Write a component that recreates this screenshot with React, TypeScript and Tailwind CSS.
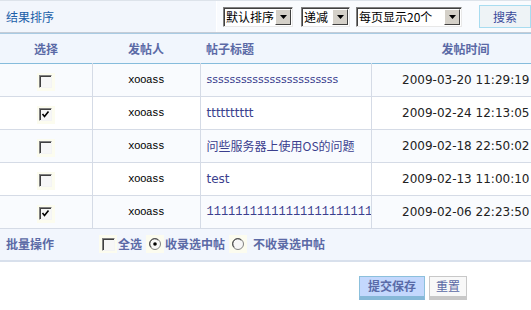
import React from "react";

const cjk = "font-['Noto_Sans_CJK_SC',sans-serif]";

function Check({ on }: { on?: boolean }) {
  return (
    <span className="inline-flex h-[18px] w-[18px] items-center justify-center bg-[#fcfcef]">
      <span className="flex h-[13px] w-[13px] items-center justify-center border border-t-[#808080] border-l-[#808080] border-r-[#f4f4f4] border-b-[#f4f4f4] bg-[#f7f7f7] shadow-[inset_1px_1px_0_#404040]">
        {on && (
          <svg width="9" height="9" viewBox="0 0 9 9">
            <path d="M1.5 4 L3.5 6.5 L7.5 1.5" stroke="#000" strokeWidth="1.6" fill="none" />
          </svg>
        )}
      </span>
    </span>
  );
}

function Radio({ on }: { on?: boolean }) {
  return (
    <span className="inline-flex h-[18px] w-[18px] items-center justify-center bg-[#fcfcef]">
      <svg width="12" height="12" viewBox="0 0 12 12">
        <circle cx="6" cy="6" r="5.5" fill="#f7f7f7" stroke="#808080" />
        <path d="M2.2 9.2 A4.5 4.5 0 0 1 9.2 2.2" stroke="#404040" fill="none" />
        {on && <circle cx="6" cy="6" r="1.8" fill="#000" />}
      </svg>
    </span>
  );
}

function Select({ label, w }: { label: string; w: string }) {
  return (
    <div className={`flex h-[20px] items-center border border-t-[#808080] border-l-[#808080] border-r-[#e8e8e8] border-b-[#e8e8e8] bg-white shadow-[inset_1px_1px_0_#404040] ${w}`}>
      <span className={`flex-1 whitespace-nowrap pl-[2px] text-[12px] leading-[16px] text-black ${cjk}`}>{label}</span>
      <span className="mr-[1px] flex h-[16px] w-[16px] shrink-0 items-center justify-center border border-t-white border-l-white border-r-[#404040] border-b-[#404040] bg-[#d4d0c8]">
        <svg width="7" height="4" viewBox="0 0 7 4">
          <path d="M0 0 H7 L3.5 4 Z" fill="#000" />
        </svg>
      </span>
    </div>
  );
}

type Row = { on: boolean; title: string; titleCls: string; time: string };

const rows: Row[] = [
  { on: false, title: "sssssssssssssssssssssss", titleCls: "font-['DejaVu_Sans',sans-serif] text-[11px]", time: "2009-03-20 11:29:19" },
  { on: true, title: "tttttttttt", titleCls: "font-['DejaVu_Sans',sans-serif] text-[12px]", time: "2009-02-24 12:13:05" },
  { on: false, title: "问些服务器上使用OS的问题", titleCls: `${cjk} text-[12px]`, time: "2009-02-18 22:50:02" },
  { on: false, title: "test", titleCls: "font-['DejaVu_Sans',sans-serif] text-[12px]", time: "2009-02-13 11:00:10" },
  { on: true, title: "111111111111111111111111", titleCls: "font-['Liberation_Mono',monospace] text-[12px]", time: "2009-02-06 22:23:50" },
];

export default function App() {
  return (
    <div className="h-[310px] w-[531px] overflow-hidden bg-white">
      <div className="flex h-[33px] border-t border-b border-t-[#dde3ea] border-b-[#c5ccd6]">
        <div className={`flex w-[221px] items-center bg-[#f2f6fc] pl-[6px] text-[12px] text-[#2060a8] ${cjk}`}>结果排序</div>
        <div className="flex flex-1 items-center gap-[6px] border-l border-white bg-[#f9fbfe] pl-[6px]">
          <Select label="默认排序" w="w-[70px]" />
          <Select label="递减" w="w-[49px] ml-[2px]" />
          <Select label="每页显示20个" w="w-[106px]" />
          <button className={`ml-[11px] h-[23px] w-[52px] border border-[#a8dcf0] bg-[#eef3f6] text-[12px] text-[#3a4a9a] ${cjk}`}>搜索</button>
        </div>
      </div>

      <table className="w-[560px] table-fixed border-collapse">
        <colgroup>
          <col className="w-[92px]" />
          <col className="w-[108px]" />
          <col className="w-[171px]" />
          <col className="w-[189px]" />
        </colgroup>
        <thead>
          <tr className={`h-[30px] border-t border-b border-t-[#a9cbe3] border-b-[#86bcdc] bg-[#f1f6fd] text-[12px] font-bold text-[#5b6aa6] ${cjk}`}>
            <th className="text-center">选择</th>
            <th className="text-center">发帖人</th>
            <th className="pl-[6px] text-left">帖子标题</th>
            <th className="text-center">发帖时间</th>
          </tr>
        </thead>
        <tbody>
          {rows.map((r, i) => (
            <tr key={i} className={`h-[33px] border-b border-[#d5dbe6] ${i % 2 === 0 ? "bg-[#f9fbfe]" : "bg-white"}`}>
              <td className="border-r border-[#d5dbe6] text-center">
                <span className="inline-flex align-middle"><Check on={r.on} /></span>
              </td>
              <td className="border-r border-[#d5dbe6] text-center font-['Liberation_Mono',monospace] text-[11px] tracking-[-0.6px] text-black">xooass</td>
              <td className="border-r border-[#d5dbe6] p-0">
                <div className={`w-[170px] overflow-hidden whitespace-nowrap pl-[6px] text-[#3b3f8e] ${r.titleCls}`}>{r.title}</div>
              </td>
              <td className="text-center font-['DejaVu_Sans',sans-serif] text-[12px] text-[#222]">{r.time}</td>
            </tr>
          ))}
          <tr className="h-[32px] border-b-2 border-[#d8e0ec] bg-[#f2f6fd]">
            <td colSpan={4} className="p-0">
              <div className={`flex items-center text-[12px] font-bold text-[#5b6aa6] ${cjk}`}>
                <span className="w-[99px] pl-[6px]">批量操作</span>
                <Check />
                <span className="ml-[1px]">全选</span>
                <span className="ml-[4px]"><Radio on /></span>
                <span className="ml-[1px]">收录选中帖</span>
                <span className="ml-[4px]"><Radio /></span>
                <span className="ml-[6px]">不收录选中帖</span>
              </div>
            </td>
          </tr>
        </tbody>
      </table>

      <div className={`flex gap-[4px] pl-[359px] pt-[14px] text-[12px] ${cjk}`}>
        <button className="h-[24px] w-[66px] border border-b-4 border-[#8cc0dc] border-b-[#86b8d8] bg-[#c4d8fd] font-bold text-[#5a6ba8]">提交保存</button>
        <button className="h-[24px] w-[38px] border border-b-4 border-[#c8c8c8] bg-[#f8f8f8] text-[#5b6aa6]">重置</button>
      </div>
    </div>
  );
}
